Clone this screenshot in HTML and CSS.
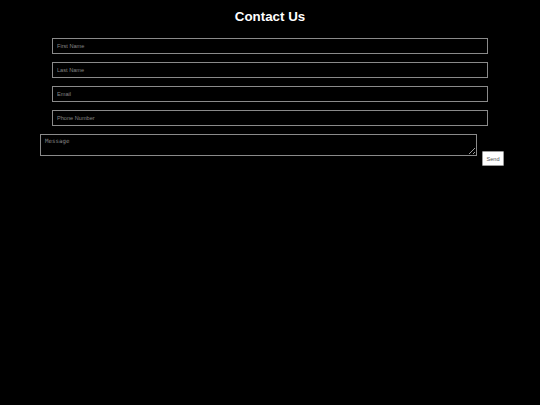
FILE: index.html
```html
<!DOCTYPE html>
<html lang="en">
<head>
    <meta charset="UTF-8">
    <meta name="viewport" content="width=device-width, initial-scale=1.0">
    <title>Contact Us</title>
    <link rel="stylesheet" href="styles.css">
</head>
<body>
    <h1>Contact Us</h1>

    <form class="contact-form" onsubmit="return false;">
        <input type="text" class="field" placeholder="First Name">
        <input type="text" class="field" placeholder="Last Name">
        <input type="email" class="field" placeholder="Email">
        <input type="tel" class="field" placeholder="Phone Number">

        <div class="message-row">
            <textarea class="message" placeholder="Message"></textarea>
            <button type="submit" class="send">Send</button>
        </div>
    </form>
</body>
</html>
```

FILE: styles.css
```css
body {
    font-family: 'Liberation Sans', Arial, sans-serif;
    background: #000;
    color: #fff;
    margin: 0;
}

h1 {
    font-size: 13.33px;
    font-weight: bold;
    text-align: center;
    margin: 9px 0 0;
    line-height: 15px;
}

.contact-form {
    margin-top: 14px;
}

.field {
    display: block;
    box-sizing: border-box;
    width: 436px;
    height: 16px;
    margin: 0 auto 8px;
    padding: 0 4px;
    background: #000;
    color: #ddd;
    border: 1px solid #8a8a8a;
    font-family: 'Liberation Sans', Arial, sans-serif;
    font-size: 5.6px;
    outline: none;
}

.field::placeholder,
.message::placeholder {
    color: #858585;
}

.message-row {
    display: flex;
    justify-content: center;
    align-items: flex-start;
    padding-left: 4px;
}

.message {
    box-sizing: border-box;
    width: 437px;
    height: 22px;
    margin: 0;
    padding: 3px 4px;
    background: #000;
    color: #ddd;
    border: 1px solid #8a8a8a;
    font-family: 'DejaVu Sans Mono', 'Liberation Mono', monospace;
    font-size: 5.8px;
    outline: none;
}

.send {
    box-sizing: border-box;
    width: 22px;
    height: 15px;
    margin: 17px 0 0 5px;
    padding: 0;
    background: #fff;
    color: #555;
    border: 1px solid #999;
    border-radius: 1px;
    font-family: 'Liberation Sans', Arial, sans-serif;
    font-size: 5.6px;
}
```
